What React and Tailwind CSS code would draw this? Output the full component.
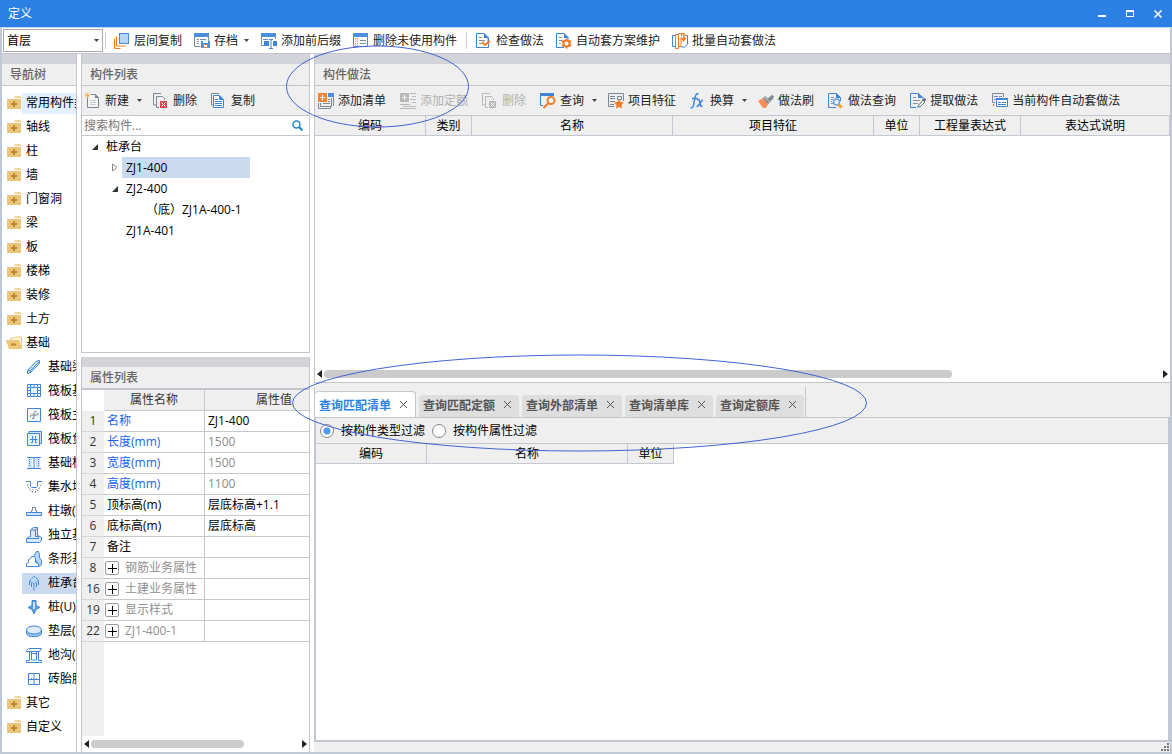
import { useState } from "react";
import clsx from "clsx";

const Svg = ({ children, className, ...rest }) => (
  <svg
    width="16"
    height="16"
    viewBox="0 0 16 16"
    fill="none"
    className={clsx("shrink-0", className)}
    {...rest}
  >
    {children}
  </svg>
);

// --- Toolbar icons ---
const LayerCopyIcon = () => (
  <Svg>
    <rect x="5.5" y="0.5" width="9" height="10" fill="#b5d6f8" stroke="#4a8bd6" />
    <path d="M2.5 3.5v9.5h9" stroke="#f07c28" />
    <path d="M0.5 6v9.500h6" stroke="#f07c28" />
  </Svg>
);

const ArchiveIcon = () => (
  <Svg>
    <path d="M0.500 3v10.500h6M14.500 3v5" stroke="#7f8e9c" />
    <path d="M0 0h15v4h-15z" fill="#4a90dd" />
    <path d="M3 6.500h2M6 6.500h6M3 8.500h2M3 10.500h2" stroke="#7f8e9c" />
    <path d="M7 8h9v7h-9z" fill="#4a90dd" />
    <path d="M9 8h5v2h-5z" fill="#fff" />
    <path d="M9 11h5v4h-5z" fill="#f07c28" />
    <path d="M10 12h3v2h-3z" fill="#fff" />
  </Svg>
);

const AffixIcon = () => (
  <Svg>
    <path d="M0.500 3v9.500h3M14.500 3v3" stroke="#7f8e9c" />
    <path d="M0 0h15v4h-15z" fill="#4a90dd" />
    <path d="M2 6.500h5" stroke="#7f8e9c" />
    <path d="M3 8h5v5h-5zM12 8h4v5h-4z" fill="#3f86d6" />
    <path d="M8 6.500h4M8 15.500h4M10 6v10" stroke="#3f86d6" />
  </Svg>
);

const DeleteUnusedIcon = () => (
  <Svg>
    <path d="M0.500 3v10.500h14v-10.500" stroke="#4a90dd" />
    <path d="M0 0h15v4h-15z" fill="#4a90dd" />
    <path d="M7 7.500h6M7 10.500h6" stroke="#7f8e9c" />
    <path d="M2.500 5v8M4.500 5v8" stroke="#f59a23" strokeDasharray="1.500 1" />
  </Svg>
);

const PageOutline = () => (
  <>
    <path d="M8 14.500H0.500V0.500H8l4 4V9" stroke="#3f86d6" />
    <path d="M8 0v5h5z" fill="#3f86d6" />
  </>
);

const CheckMethodIcon = () => (
  <Svg>
    <PageOutline />
    <path d="M12.500 5v9.500H6" stroke="#3f86d6" />
    <path d="M3 4.500h3M3 7.500h6M3 10.500h3" stroke="#8592a0" />
    <path d="M6 9l3 3 5-4" stroke="#f07c28" strokeWidth="2" />
  </Svg>
);

const SchemeIcon = () => (
  <Svg>
    <PageOutline />
    <path d="M3 4.500h3M3 7.500h3M3 10.500h2" stroke="#8592a0" />
    <circle cx="10.500" cy="10.500" r="3" fill="#fff" stroke="#f07c28" strokeWidth="2" />
    <path
      d="M10.500 5.500v2M10.500 13.500v2M6 8l2 1M13 12l2 1M6 13l2-1M13 9l2-1"
      stroke="#f07c28"
      strokeWidth="2"
    />
  </Svg>
);

const BatchIcon = () => (
  <Svg>
    <path d="M3 2.500H0.500v11H3M13 2.500h2.500v9l-3 2.500H9" stroke="#3f86d6" />
    <path d="M3.500 1.500h3v14h-3zM6.500 0.500h3v3M6.500 13.500h2.500V4" stroke="#f07c28" />
    <path d="M7 0.500h5v5" stroke="#f07c28" strokeWidth="1.500" />
    <path d="M8.500 5h6l-3 4z" fill="#f07c28" />
  </Svg>
);

const NewIcon = () => (
  <Svg>
    <path d="M2.500 5v9.500h11V4.500l-3-3H6" fill="#f4f4f4" stroke="#7c8794" />
    <path d="M10 1v4h4z" fill="#7c8794" />
    <path d="M5 7.500h6M5 9.500h6M5 11.500h6" stroke="#c9ced4" />
    <path
      d="M2.500 0v5M0 2.500h5M0.500 0.500l4 4M4.500 0.500l-4 4"
      stroke="#f0a020"
      strokeDasharray="1 0.500"
    />
  </Svg>
);

const DeleteIcon = ({ disabled }) => (
  <Svg>
    <path d="M8 0.500H0.500V12H3" stroke={disabled ? "#b9b9b9" : "#7c8794"} />
    <path
      d="M6 14.500H3.500V3.500h6l2 2V7"
      stroke={disabled ? "#b9b9b9" : "#7c8794"}
    />
    <path d="M7 8h7v7H7z" fill={disabled ? "#b9b9b9" : "#d9454c"} />
    <path d="M8.500 9.500l4 4M12.500 9.500l-4 4" stroke="#fff" />
  </Svg>
);

const CopyIcon = () => (
  <Svg>
    <path d="M8 0.500H0.500V12H2" stroke="#7c8794" />
    <path d="M2.500 2.500h6l4 4v8h-10z" fill="#fff" stroke="#3f86d6" />
    <path d="M8 2v5h5z" fill="#3f86d6" />
    <path d="M4 6.500h3M4 8.500h7M4 10.500h7M4 12.500h7" stroke="#3f86d6" />
  </Svg>
);

const AddListIcon = () => (
  <Svg>
    <path d="M15.500 2v11" stroke="#7c8794" />
    <path d="M10 0h6v4h-6z" fill="#4a90dd" />
    <path d="M0.500 10v5.500h12V13M2.500 10v3.500h11V5" stroke="#7c8794" />
    <path d="M10 6.500h2M10 8.500h2M5 10.500h7" stroke="#7c8794" />
    <path d="M0 0h9v9H0z" fill="#f0883c" />
    <path d="M4.500 2v5M2 4.500h5" stroke="#fff" />
  </Svg>
);

const AddQuotaIcon = () => (
  <Svg>
    <path
      d="M10 0.500h6M12 3.500h4M10 6.500h6M12 9.500h4M0 11.500h10M3 13.500h13M0 15.500h16"
      stroke="#b9b9b9"
    />
    <path d="M0 0h9v9H0z" fill="#b9b9b9" />
    <path d="M4.500 2v5M2 4.500h5" stroke="#fff" />
  </Svg>
);

const QueryIcon = () => (
  <Svg>
    <path d="M0.500 2v10.500H3M13.500 1v2" stroke="#3f86d6" />
    <path d="M0 0h14v3H0z" fill="#3f86d6" />
    <circle cx="11" cy="7.500" r="3.500" fill="#fff" stroke="#f07c28" strokeWidth="2" />
    <path d="M8.500 10l-5 5" stroke="#f07c28" strokeWidth="2" />
  </Svg>
);

const FeatureIcon = () => (
  <Svg>
    <path d="M15.500 8V0.500H0.500v13H6" stroke="#7c8794" />
    <path d="M2 3.500h5M2 5.500h5M2 8.500h5M2 11.500h4M9.500 3.500h4v3h-4z" stroke="#7c8794" />
    <path
      d="M11 6l1.500 3 3.500.500-2.500 2.500.500 3.500-3-1.500-3 1.500.500-3.500L6 9.500 9.500 9z"
      fill="#f07c28"
    />
  </Svg>
);

const FxIcon = () => (
  <Svg>
    <path
      d="M8.500 1C6.500 0 5.500 2 5 4.500L3.500 12C3 15 1.500 15.500 0.500 14.500M2 5.500h6"
      stroke="#3f86d6"
      strokeWidth="1.500"
    />
    <path
      d="M7 7c2-1 2.500 0 3 3s1 4 2.500 3M13 7c-2 0-4 7-6.500 6.500"
      stroke="#3f86d6"
      strokeWidth="1.500"
    />
  </Svg>
);

const BrushIcon = () => (
  <Svg>
    <path d="M0 8l5-3 6 5-3 5H5z" fill="#f5905a" />
    <path d="M5 5l2-2 6 5-3 3z" fill="#7d8b96" />
    <path d="M9 6l5-4 2 1-1 3-4 3z" fill="#7d8b96" />
    <path d="M6.500 4l5 5" stroke="#dfe3e6" />
  </Svg>
);

const MethodQueryIcon = () => (
  <Svg>
    <path d="M8 14.500H0.500V0.500h8l4 4V8" stroke="#3f86d6" />
    <path d="M8 0v5h5z" fill="#3f86d6" />
    <path d="M3 4.500h3M3 6.500h2M3 8.500h1M3 10.500h2" stroke="#8592a0" />
    <circle cx="8.500" cy="9" r="3" fill="#e6f1fc" stroke="#6aa3e0" strokeWidth="1.500" />
    <path d="M10.500 11.500l3 3" stroke="#f59a23" strokeWidth="3" />
  </Svg>
);

const ExtractIcon = () => (
  <Svg>
    <path d="M6 14.500H0.500V0.500h8l4 4" stroke="#3f86d6" />
    <path d="M8 0v5h6z" fill="#3f86d6" />
    <path d="M3 4.500h3M3 7.500h7M3 10.500h5" stroke="#8592a0" />
    <path d="M8 13l5-6 2 2-5 5z" fill="#fff" stroke="#5f6c77" />
    <path d="M12 6l3-1 1 2-2 2z" fill="#5f6c77" />
    <path d="M7 15l1-3 2 2z" fill="#2fb3c7" />
  </Svg>
);

const AutoMethodIcon = () => (
  <Svg>
    <path d="M3 9.500H0.500V0.500h11V4" stroke="#7c8794" />
    <path d="M2 3.500h4M7 3.500h3M2 6.500h2" stroke="#7c8794" />
    <path d="M4.500 5.500h11v8h-11z" fill="#fff" stroke="#3f86d6" />
    <path d="M4 5h12v2H4z" fill="#3f86d6" />
    <path d="M6 9.500h3M10 9.500h4M6 11.500h8" stroke="#3f86d6" />
    <path d="M1.500 11v2" stroke="#f07c28" />
  </Svg>
);

// --- Navigation icons ---
const FolderIcon = ({ open }) =>
  open ? (
    <Svg>
      <path d="M4.500 5V3h4l1-1h6v11" fill="#fdf6e6" stroke="#ecc57a" />
      <path d="M0 5h13l3 9H3z" fill="#ecc57a" />
      <path d="M5 9.500h5" stroke="#b98a30" strokeWidth="2" />
    </Svg>
  ) : (
    <Svg>
      <path d="M9 1h5l1 1v1H8z" fill="#f4d597" />
      <path d="M1 4h14v10H1z" fill="#ecc57a" />
      <path d="M8 6v6M5 9h6" stroke="#b98a30" strokeWidth="2" />
    </Svg>
  );

const NAV_GLYPHS = {
  beam: (
    <>
      <path d="M1.500 11.500l9-9.500 3-.500v3l-9 9-3 1z" fill="#cfe3f8" />
      <path d="M2 11l2.500.500v2.500M4.500 11.500l9-9" />
    </>
  ),
  raft: (
    <>
      <path d="M1.500 1.500h13v12h-13z" />
      <path d="M4.500 4.500h7v6h-7z" fill="#eaf3fc" />
      <path
        d="M4.500 1v3M8 1v3M11.500 1v3M4.500 11v3M8 11v3M11.500 11v3M1 4.500h3M1 7.500h3M1 10.500h3M12 4.500h3M12 7.500h3M12 10.500h3"
      />
    </>
  ),
  mainBar: (
    <>
      <path d="M1.500 1.500h13v13h-13z" fill="#f3f8fd" />
      <path
        d="M8 11.500V5.500l1-1h1l.500 1M8 11l-1 .500H6M4.500 10V8.500L5 8h6.500l.500-.500V6"
        stroke="#75838f"
      />
    </>
  ),
  negBar: (
    <>
      <path d="M3 2V0.500h12.500v12H13" fill="#cfe3f8" />
      <path d="M1.500 2.500h12v12h-12z" fill="#e7f1fc" />
      <path d="M4 8.500h7.500M6.500 5v6.500H5M9.500 5v6.500h1.500" />
    </>
  ),
  strip: (
    <>
      <path d="M2 3h4v10H2zM10 3h4v10h-4z" fill="#cfe3f8" stroke="none" />
      <path d="M1 2.500h14M1 13.500h14M8 3v10" />
      <path d="M3.500 4v8M12.500 4v8" strokeDasharray="1 1" />
    </>
  ),
  sump: (
    <>
      <path d="M0 2.500h4.500v5l1 1h5l1-1v-5H16" />
      <path
        d="M1 5l2 5 3 3h4l3-3 2-5"
        stroke="#75838f"
        strokeDasharray="1.500 1.500"
      />
      <path d="M4 9.500l1 1h6M6 12.500h4" stroke="#75838f" strokeDasharray="1 2" />
    </>
  ),
  pier: (
    <>
      <path d="M0.500 9.500h15v3h-15z" fill="#cfe3f8" />
      <path d="M5.500 9V7.500h1v-3h3v3h1V9" stroke="#75838f" />
    </>
  ),
  isolated: (
    <>
      <path d="M4.500 3l3-2.500h4v8H12l3.500 2v3l-2 2H0.500v-4l3-2h1z" fill="#d8e8fa" />
      <path d="M5 3h4.500v6.500h3v2H1M9.500 3l2-2" />
    </>
  ),
  stripBase: (
    <>
      <path d="M7.500 5.500l3-5h2l1 3v3l2 3v4l-2 2z" fill="#b5d6f8" />
      <path d="M0.500 15.500v-3l2-1v-3l2-1 1-2h3l1 2v4l3 1.500v2.500z" fill="#fff" />
    </>
  ),
  pileCap: (
    <>
      <path d="M8 1l4.500 4.500L8 9 3.500 5.500z" fill="#b5d6f8" strokeDasharray="2 1" />
      <path d="M3.500 6v4M8 9v6.500M12.500 6v4M5.500 8v4M10.500 8v4" />
    </>
  ),
  pile: (
    <>
      <path d="M6 1.500h4v5l4 2-4 2-2 4.500-2-4.500-4-2 4-2z" fill="#5b9be3" />
      <path d="M7 3h2v7H7z" fill="#cfe3f8" stroke="none" />
    </>
  ),
  cushion: (
    <>
      <path d="M0.500 7v3c0 5 15 5 15 0V7" fill="#9cc4ef" />
      <ellipse cx="8" cy="7" rx="7.500" ry="4" fill="#dceafa" />
    </>
  ),
  trench: (
    <>
      <path d="M0.500 3.500l2-2h13l-2 3h-13zM0.500 13.500h3v-2M15.500 13.500h-3v-2M0.500 13.500v2h15v-2" />
      <path d="M3.500 5v8M5.500 5v8h5v-8M12.500 5v8M5 6.500h6" />
    </>
  ),
  brick: (
    <>
      <path d="M2.500 2.500h11v11h-11zM8 3v10M3 8.500h10" />
      <path d="M5 7.500h1M10 7.500h1" stroke="#75838f" />
    </>
  ),
};

const NavGlyph = ({ name }) => <Svg stroke="#3f86d6">{NAV_GLYPHS[name]}</Svg>;

const Caret = () => (
  <svg width="5" height="3" viewBox="0 0 5 3" className="shrink-0">
    <path d="M0 0h5L2.500 3z" fill="#444" />
  </svg>
);

const topTools = [
  { label: "层间复制", icon: <LayerCopyIcon /> },
  { label: "存档", icon: <ArchiveIcon />, menu: true },
  { label: "添加前后缀", icon: <AffixIcon /> },
  { label: "删除未使用构件", icon: <DeleteUnusedIcon /> },
  { divider: true },
  { label: "检查做法", icon: <CheckMethodIcon /> },
  { label: "自动套方案维护", icon: <SchemeIcon /> },
  { label: "批量自动套做法", icon: <BatchIcon /> },
];

const listTools = [
  { label: "新建", icon: <NewIcon />, menu: true },
  { label: "删除", icon: <DeleteIcon /> },
  { label: "复制", icon: <CopyIcon /> },
];

const methodTools = [
  { label: "添加清单", icon: <AddListIcon /> },
  { label: "添加定额", icon: <AddQuotaIcon />, disabled: true },
  { label: "删除", icon: <DeleteIcon disabled />, disabled: true },
  { label: "查询", icon: <QueryIcon />, menu: true },
  { label: "项目特征", icon: <FeatureIcon /> },
  { label: "换算", icon: <FxIcon />, menu: true },
  { label: "做法刷", icon: <BrushIcon /> },
  { label: "做法查询", icon: <MethodQueryIcon /> },
  { label: "提取做法", icon: <ExtractIcon /> },
  { label: "当前构件自动套做法", icon: <AutoMethodIcon /> },
];

const navItems = [
  { label: "常用构件类型", hover: true },
  { label: "轴线" },
  { label: "柱" },
  { label: "墙" },
  { label: "门窗洞" },
  { label: "梁" },
  { label: "板" },
  { label: "楼梯" },
  { label: "装修" },
  { label: "土方" },
  {
    label: "基础",
    children: [
      { label: "基础梁", icon: "beam" },
      { label: "筏板基础", icon: "raft" },
      { label: "筏板主筋", icon: "mainBar" },
      { label: "筏板负筋", icon: "negBar" },
      { label: "基础板带", icon: "strip" },
      { label: "集水坑", icon: "sump" },
      { label: "柱墩(Y)", icon: "pier" },
      { label: "独立基础", icon: "isolated" },
      { label: "条形基础", icon: "stripBase" },
      { label: "桩承台", icon: "pileCap", active: true },
      { label: "桩(U)", icon: "pile" },
      { label: "垫层(X)", icon: "cushion" },
      { label: "地沟(G)", icon: "trench" },
      { label: "砖胎膜", icon: "brick" },
    ],
  },
  { label: "其它" },
  { label: "自定义" },
];

const properties = [
  { no: 1, name: "名称", value: "ZJ1-400", link: true },
  { no: 2, name: "长度(mm)", value: "1500", link: true, muted: true },
  { no: 3, name: "宽度(mm)", value: "1500", link: true, muted: true },
  { no: 4, name: "高度(mm)", value: "1100", link: true, muted: true },
  { no: 5, name: "顶标高(m)", value: "层底标高+1.1" },
  { no: 6, name: "底标高(m)", value: "层底标高" },
  { no: 7, name: "备注", value: "" },
  { no: 8, name: "钢筋业务属性", group: true },
  { no: 16, name: "土建业务属性", group: true },
  { no: 19, name: "显示样式", group: true },
  { no: 22, name: "ZJ1-400-1", group: true },
];

const methodColumns = [
  { name: "编码", class: "w-[111px]" },
  { name: "类别", class: "w-[46px]" },
  { name: "名称", class: "w-[201px]" },
  { name: "项目特征", class: "w-[201px]" },
  { name: "单位", class: "w-[46px]" },
  { name: "工程量表达式", class: "w-[101px]" },
  { name: "表达式说明", class: "" },
];

const queryColumns = [
  { name: "编码", class: "w-[111px]" },
  { name: "名称", class: "w-[201px]" },
  { name: "单位", class: "w-[46px]" },
];

const tabs = ["查询匹配清单", "查询匹配定额", "查询外部清单", "查询清单库", "查询定额库"];

const ToolButton = ({ icon, label, menu, disabled }) => (
  <button
    type="button"
    disabled={disabled}
    className={clsx(
      "flex h-6 shrink-0 items-center gap-1 whitespace-nowrap pl-[7px]",
      menu ? "pr-1" : "pr-[7px]",
      disabled ? "text-[#b0b0b0]" : "text-[#222]"
    )}
  >
    {icon}
    {label}
    {menu && (
      <span className="pl-1">
        <Caret />
      </span>
    )}
  </button>
);

const ToolRow = ({ tools }) => (
  <div className="flex h-[30px] shrink-0 items-center overflow-hidden border-b border-[#c3c6cc] bg-[#efefef]">
    <div className="-ml-1 flex">
      {tools.map((tool, i) => (
        <ToolButton key={i} {...tool} />
      ))}
    </div>
  </div>
);

const PanelTitle = ({ children }) => (
  <div className="shrink-0">
    <div className="h-[10px] bg-[#d3d4da]" />
    <h2 className="flex h-[22px] items-center border-b border-[#c3c6cc] bg-[#efefef] px-2 font-medium text-[#666]">
      {children}
    </h2>
  </div>
);

const ColumnHeads = ({ columns, className }) => (
  <table
    className={clsx("table-fixed border-separate border-spacing-0", className)}
  >
    <thead>
      <tr>
        {columns.map((col) => (
          <th
            key={col.name}
            className={clsx(
              "h-5 border-r border-b border-[#c3c8d2] bg-[#efefef] p-0 text-center font-normal",
              col.class
            )}
          >
            {col.name}
          </th>
        ))}
      </tr>
    </thead>
  </table>
);

const ScrollBar = ({ thumb }) => (
  <div className="flex h-4 shrink-0 items-center gap-[2px] px-[2px]">
    <svg width="5" height="8" viewBox="0 0 5 8">
      <path d="M5 0v8L0 4z" fill="#222" />
    </svg>
    <div className="flex-1">
      <div className={clsx("h-2 rounded-full bg-[#cbcbcb]", thumb)} />
    </div>
    <svg width="5" height="8" viewBox="0 0 5 8">
      <path d="M0 0v8l5-4z" fill="#222" />
    </svg>
  </div>
);

const NavTree = () => (
  <aside className="flex w-[75px] shrink-0 flex-col overflow-hidden border-r border-[#c3c6cc]">
    <PanelTitle>导航树</PanelTitle>
    <ul className="pt-[5px] whitespace-nowrap">
      {navItems.map((item) => (
        <li key={item.label}>
          <div className="flex h-6 items-center pl-1">
            <FolderIcon open={Boolean(item.children)} />
            <span
              className={clsx(
                "flex h-[21px] flex-1 items-center pl-1",
                item.hover && "bg-[#e2f0ff]"
              )}
            >
              {item.label}
            </span>
          </div>
          {item.children && (
            <ul className="pl-5">
              {item.children.map((child) => (
                <li key={child.label} className="flex h-6 items-center">
                  <span
                    className={clsx(
                      "flex h-[21px] flex-1 items-center gap-[6px] pl-1",
                      child.active && "bg-[#c9d9f0]"
                    )}
                  >
                    <NavGlyph name={child.icon} />
                    {child.label}
                  </span>
                </li>
              ))}
            </ul>
          )}
        </li>
      ))}
    </ul>
  </aside>
);

const OpenArrow = () => (
  <svg width="6" height="6" viewBox="0 0 6 6">
    <path d="M6 0v6H0z" fill="#333" />
  </svg>
);

const ClosedArrow = () => (
  <svg width="6" height="9" viewBox="0 0 6 9">
    <path d="M0.500 1v7L5 4.500z" fill="#fff" stroke="#888" />
  </svg>
);

const ComponentTree = () => (
  <ul className="flex-1 overflow-hidden border-b border-[#c3c6cc]">
    <li className="flex h-[21px] items-center gap-2 pl-[10px]">
      <OpenArrow />
      桩承台
    </li>
    <li className="flex h-[21px] items-center gap-1 pl-[30px]">
      <ClosedArrow />
      <span className="flex h-[21px] w-32 items-center bg-[#c9d9f0] pl-1">
        ZJ1-400
      </span>
    </li>
    <li className="flex h-[21px] items-center gap-1 pl-[30px]">
      <OpenArrow />
      <span className="pl-1">ZJ2-400</span>
    </li>
    <li className="flex h-[21px] items-center pl-16">（底）ZJ1A-400-1</li>
    <li className="flex h-[21px] items-center pl-11">ZJ1A-401</li>
  </ul>
);

const PropertyTable = () => (
  <div className="flex min-h-0 flex-1 flex-col overflow-hidden border-t border-[#c3c6cc]">
    <table className="w-[261px] table-fixed border-separate border-spacing-0">
      <thead>
        <tr className="text-[#333]">
          <th className="h-[21px] w-[22px] p-0" />
          <th className="w-[101px] border-r border-b border-[#c6c8cc] bg-[#efefef] p-0 font-normal">
            属性名称
          </th>
          <th className="border-b border-[#c6c8cc] bg-[#efefef] p-0 font-normal">
            属性值
          </th>
        </tr>
      </thead>
      <tbody>
        {properties.map((row) => (
          <tr key={row.no}>
            <td className="h-[21px] border-b border-[#d6d6d6] bg-[#efefef] p-0 text-center text-[#333]">
              {row.no}
            </td>
            <td
              className={clsx(
                "border-r border-b border-[#c6c8cc] p-0",
                row.group ? "pl-px text-[#909090]" : "pl-[3px]",
                row.link && "text-[#1a5ff0]"
              )}
            >
              {row.group ? (
                <span className="flex items-center gap-[6px]">
                  <button
                    type="button"
                    aria-label={row.name}
                    className="flex size-[14px] items-center justify-center rounded-xs border border-[#9a9a9a]"
                  >
                    <svg width="9" height="9" viewBox="0 0 9 9">
                      <path d="M4.500 0v9M0 4.500h9" stroke="#000" />
                    </svg>
                  </button>
                  {row.name}
                </span>
              ) : (
                row.name
              )}
            </td>
            <td
              className={clsx(
                "border-b border-[#c6c8cc] p-0 pl-[3px]",
                row.muted && "text-[#8c8c8c]"
              )}
            >
              {row.value}
            </td>
          </tr>
        ))}
      </tbody>
    </table>
    <div className="w-[22px] flex-1 bg-[#efefef]" />
  </div>
);

const QueryPanel = () => {
  const [active, setActive] = useState(0);
  const [filter, setFilter] = useState("type");

  return (
    <section className="flex min-h-0 flex-col bg-[#efefef]">
      <div className="flex h-[35px] shrink-0 items-end border-b border-[#c3c6cc]">
        <div className="flex h-[30px] items-end gap-[3px] border-r border-l border-[#c3c6cc] pr-px">
          {tabs.map((tab, i) => (
            <div
              key={tab}
              className={clsx(
                "flex items-center gap-2 rounded-t-sm pr-[7px] pl-1 font-bold whitespace-nowrap",
                i === active
                  ? "h-[26px] border-t border-r border-[#c3c6cc] bg-white pt-[3px] text-[#2d80e3]"
                  : "h-[22px] bg-[#dedede] text-[#555]"
              )}
            >
              <button type="button" onClick={() => setActive(i)}>
                {tab}
              </button>
              <button type="button" aria-label={`关闭${tab}`} className="pb-1">
                <svg width="9" height="9" viewBox="0 0 9 9">
                  <path d="M1 1l7 7M8 1l-7 7" stroke="#555" />
                </svg>
              </button>
            </div>
          ))}
        </div>
      </div>
      <div className="flex flex-1 flex-col border-r-2 border-b-2 border-l-2 border-[#c3c8d0] bg-white">
        <div className="flex h-[26px] items-center gap-[7px] border-b border-[#c3c6cc] bg-[#efefef] px-1">
          {[
            ["type", "按构件类型过滤"],
            ["attr", "按构件属性过滤"],
          ].map(([key, label]) => (
            <label key={key} className="flex items-center gap-[7px]">
              <input
                type="radio"
                name="filter"
                checked={filter === key}
                onChange={() => setFilter(key)}
                className="size-[14px] appearance-none rounded-full border border-[#888] bg-white checked:bg-[radial-gradient(circle,#4a9cf5_3px,#fff_4px)]"
              />
              {label}
            </label>
          ))}
        </div>
        <ColumnHeads columns={queryColumns} className="w-[358px]" />
      </div>
      <div className="flex h-[10px] shrink-0 items-end justify-end px-px">
        <svg width="9" height="9" viewBox="0 0 9 9" fill="#777">
          <path d="M7 0h2v2h-2zM4 3h2v2h-2zM7 3h2v2h-2zM1 6h2v2h-2zM4 6h2v2h-2zM7 6h2v2h-2z" />
        </svg>
      </div>
    </section>
  );
};

// Hand-marked callouts around the toolbar and the query tabs
const Callouts = () => (
  <svg
    className="pointer-events-none absolute top-0 left-0"
    width="880"
    height="460"
    viewBox="0 0 880 460"
    fill="none"
    stroke="#4262d4"
  >
    <ellipse cx="377.500" cy="86.500" rx="91" ry="40.500" />
    <ellipse cx="579.500" cy="403" rx="287" ry="48" />
  </svg>
);

const App = () => {
  return (
    <main className="relative flex h-screen flex-col overflow-hidden bg-white font-['Open_Sans','Noto_Sans_CJK_SC',sans-serif] text-[12px] leading-4 text-black">
      {/* --- Title bar --- */}
      <header className="flex h-7 shrink-0 items-center justify-between border-b border-[#c3d3e8] bg-[#2d80e3] pr-[9px] pl-2 text-white">
        <h1>定义</h1>
        <div className="flex items-center gap-[18px]">
          <button type="button" aria-label="最小化">
            <svg width="10" height="10" viewBox="0 0 10 10">
              <path d="M1 6h8v2H1z" fill="#fff" />
            </svg>
          </button>
          <button type="button" aria-label="最大化">
            <svg width="10" height="10" viewBox="0 0 10 10">
              <path d="M1 1h8v7H1zM2 3v4h6V3z" fill="#fff" fillRule="evenodd" />
            </svg>
          </button>
          <button type="button" aria-label="关闭">
            <svg width="10" height="10" viewBox="0 0 10 10">
              <path d="M1.500 1.500l7 7M8.500 1.500l-7 7" stroke="#fff" strokeWidth="1.500" />
            </svg>
          </button>
        </div>
      </header>

      <div className="flex min-h-0 flex-1 flex-col border-x-2 border-b-2 border-[#c0c8d5]">
        {/* --- Main toolbar --- */}
        <div className="flex h-[26px] shrink-0 items-center border-b border-[#c3c6cc] px-px">
          <div className="relative">
            <select
              aria-label="楼层"
              className="h-[23px] w-[100px] appearance-none border border-[#a9a9a9] bg-white pl-[3px]"
            >
              <option>首层</option>
            </select>
            <span className="pointer-events-none absolute top-[10px] right-1">
              <Caret />
            </span>
          </div>
          <div className="mx-[2px] h-[17px] w-px bg-[#cfcfcf]" />
          {topTools.map((tool, i) =>
            tool.divider ? (
              <div key={i} className="mx-[3px] h-[17px] w-px bg-[#cfcfcf]" />
            ) : (
              <button
                key={tool.label}
                type="button"
                className="flex h-6 shrink-0 items-center gap-1 px-[6px] whitespace-nowrap text-[#222]"
              >
                {tool.icon}
                {tool.label}
                {tool.menu && (
                  <span className="pl-[2px]">
                    <Caret />
                  </span>
                )}
              </button>
            )
          )}
        </div>

        <div className="flex min-h-0 flex-1 gap-1">
          <NavTree />

          {/* --- Component list and its properties --- */}
          <div className="flex w-[229px] shrink-0 flex-col gap-1">
            <section className="flex min-h-0 flex-[299] flex-col border-x border-[#c3c6cc]">
              <PanelTitle>构件列表</PanelTitle>
              <ToolRow tools={listTools} />
              <div className="flex h-5 shrink-0 items-center border-b border-[#c3c6cc] pr-[6px] pl-[2px]">
                <input
                  type="text"
                  aria-label="搜索构件"
                  placeholder="搜索构件..."
                  className="min-w-0 flex-1 outline-none placeholder:text-[#777]"
                />
                <svg width="11" height="11" viewBox="0 0 11 11" fill="none" stroke="#1e88c7">
                  <circle cx="4.500" cy="4.500" r="3.500" strokeWidth="1.500" />
                  <path d="M7 7l3.500 3.500" strokeWidth="2" />
                </svg>
              </div>
              <ComponentTree />
            </section>
            <section className="flex min-h-0 flex-[395] flex-col border-x border-[#c3c6cc]">
              <PanelTitle>属性列表</PanelTitle>
              <PropertyTable />
              <ScrollBar thumb="w-[73%]" />
            </section>
          </div>

          {/* --- Methods and lookup --- */}
          <div className="grid min-w-0 flex-1 grid-rows-[329fr_369fr]">
            <section className="flex min-h-0 flex-col border-b border-l border-[#c3c6cc]">
              <PanelTitle>构件做法</PanelTitle>
              <ToolRow tools={methodTools} />
              <ColumnHeads columns={methodColumns} className="w-full" />
              <div className="flex-1" />
              <ScrollBar thumb="w-3/4" />
            </section>
            <QueryPanel />
          </div>
        </div>
      </div>

      <Callouts />
    </main>
  );
};

export default App;
